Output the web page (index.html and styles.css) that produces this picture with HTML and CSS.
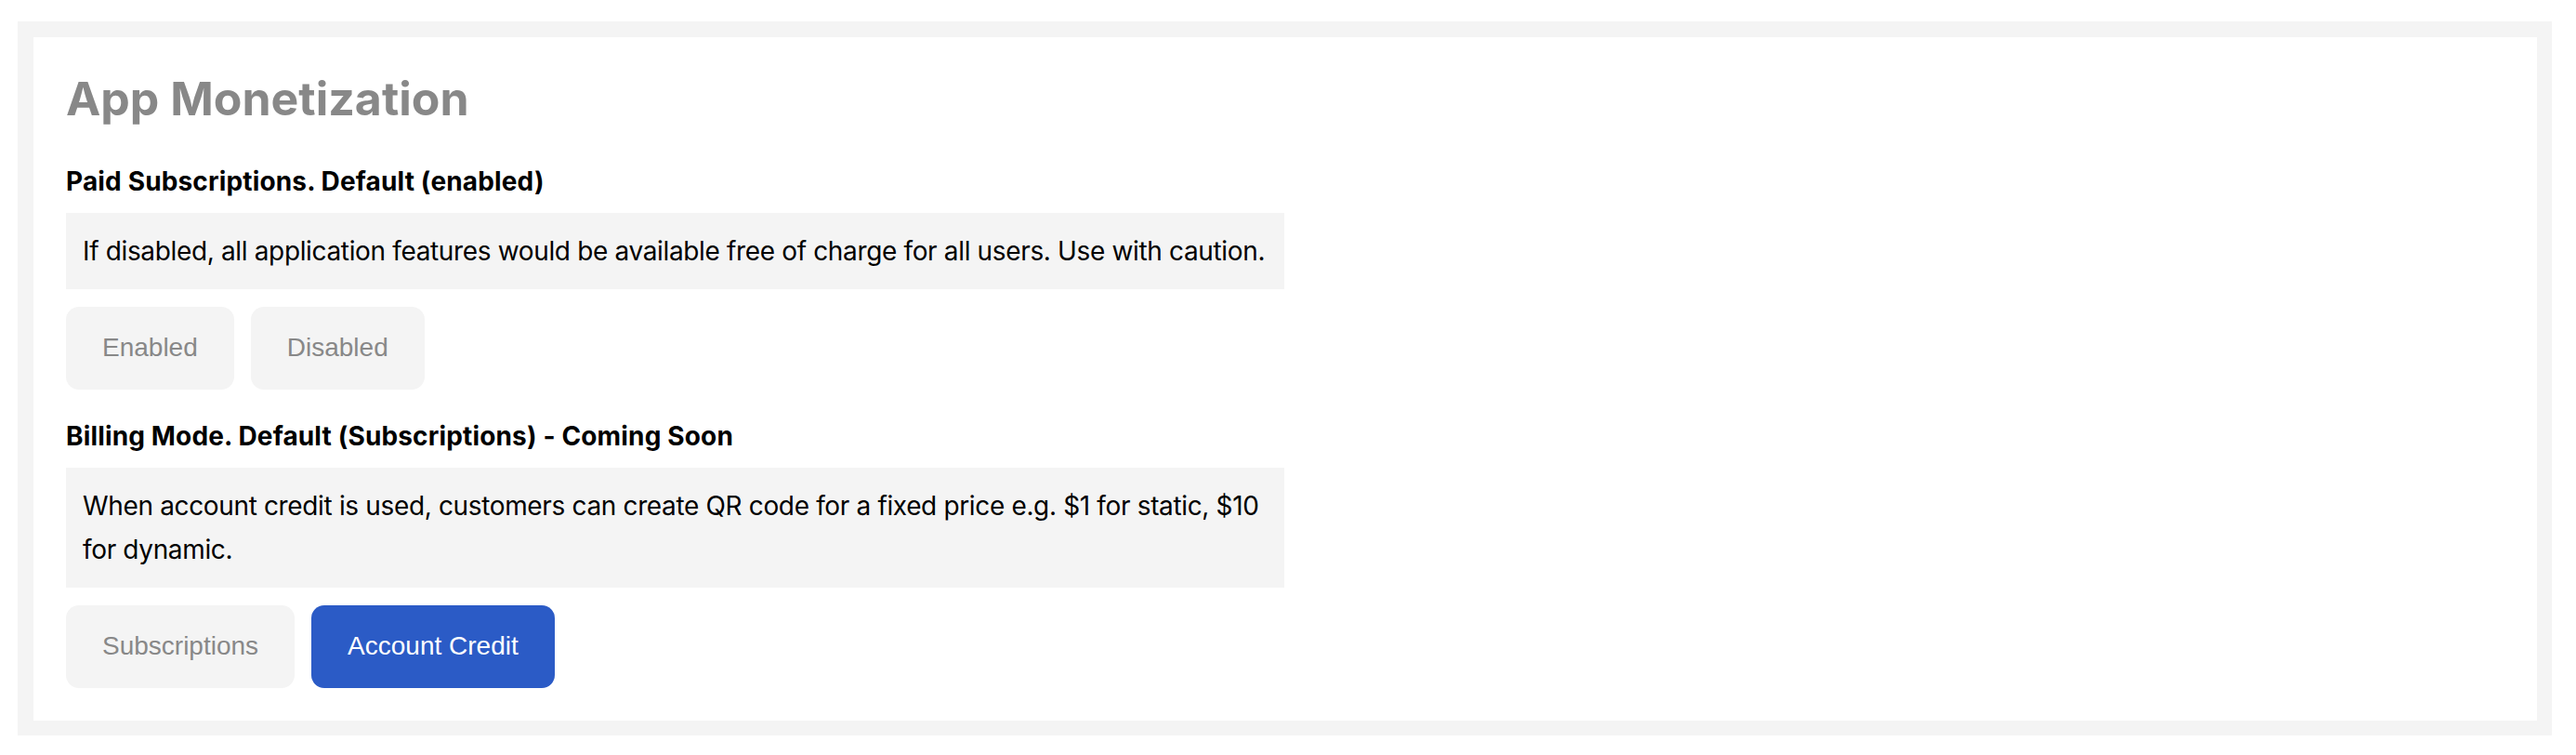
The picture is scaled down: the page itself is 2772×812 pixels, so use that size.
FILE: index.html
```html
<html>
  <head>
    <title>App Monetization</title>
    <link rel="stylesheet" href="styles.css">
  </head>
  <body>
    <div class="panel">
      <section class="card">
        <h1>App Monetization</h1>

        <div class="field">
          <h4 class="field-label">Paid Subscriptions. Default (enabled)</h4>
          <p class="note">If disabled, all application features would be available free of charge for all users. Use with caution.</p>
          <div class="choices">
            <button class="choice">Enabled</button>
            <button class="choice">Disabled</button>
          </div>
        </div>

        <div class="field">
          <h4 class="field-label">Billing Mode. Default (Subscriptions) - Coming Soon</h4>
          <p class="note">When account credit is used, customers can create QR code for a fixed price e.g. $1 for static, $10 for dynamic.</p>
          <div class="choices">
            <button class="choice">Subscriptions</button>
            <button class="choice active">Account Credit</button>
          </div>
        </div>
      </section>
    </div>
  </body>
</html>
```

FILE: styles.css
```css
body {
    margin: 0;
    padding: 23px 26px 18px 19px;
    font-family: Inter, "Noto Sans", sans-serif;
    color: #000;
    background: #fff;
}

.panel {
    background: #f4f4f4;
    padding: 17px 16px 16px 17px;
}

.card {
    background: #fff;
    padding: 34px 35px 35px;
}

h1 {
    margin: 0 0 40px;
    font-size: 50px;
    line-height: 64px;
    font-weight: 700;
    color: #888;
}

.field + .field {
    margin-top: 33px;
}

.field-label {
    margin: 0 0 17px;
    font-size: 28px;
    line-height: 34px;
    font-weight: 700;
    letter-spacing: 0.15px;
}

.note {
    box-sizing: border-box;
    width: 1311px;
    margin: 0;
    padding: 18px 18px 17px;
    background: #f4f4f4;
    font-size: 28px;
    line-height: 47px;
    letter-spacing: -0.35px;
    color: #000;
}

.choices {
    display: flex;
    gap: 18px;
    margin-top: 19px;
}

.choice {
    border: none;
    border-radius: 14px;
    padding: 27px 39px 29px;
    background: #f4f4f4;
    color: #888;
    font-family: "Liberation Sans", Arial, sans-serif;
    font-size: 28px;
    line-height: 33px;
    cursor: pointer;
}

.choice.active {
    background: #2b5bc6;
    color: #fff;
}
```
